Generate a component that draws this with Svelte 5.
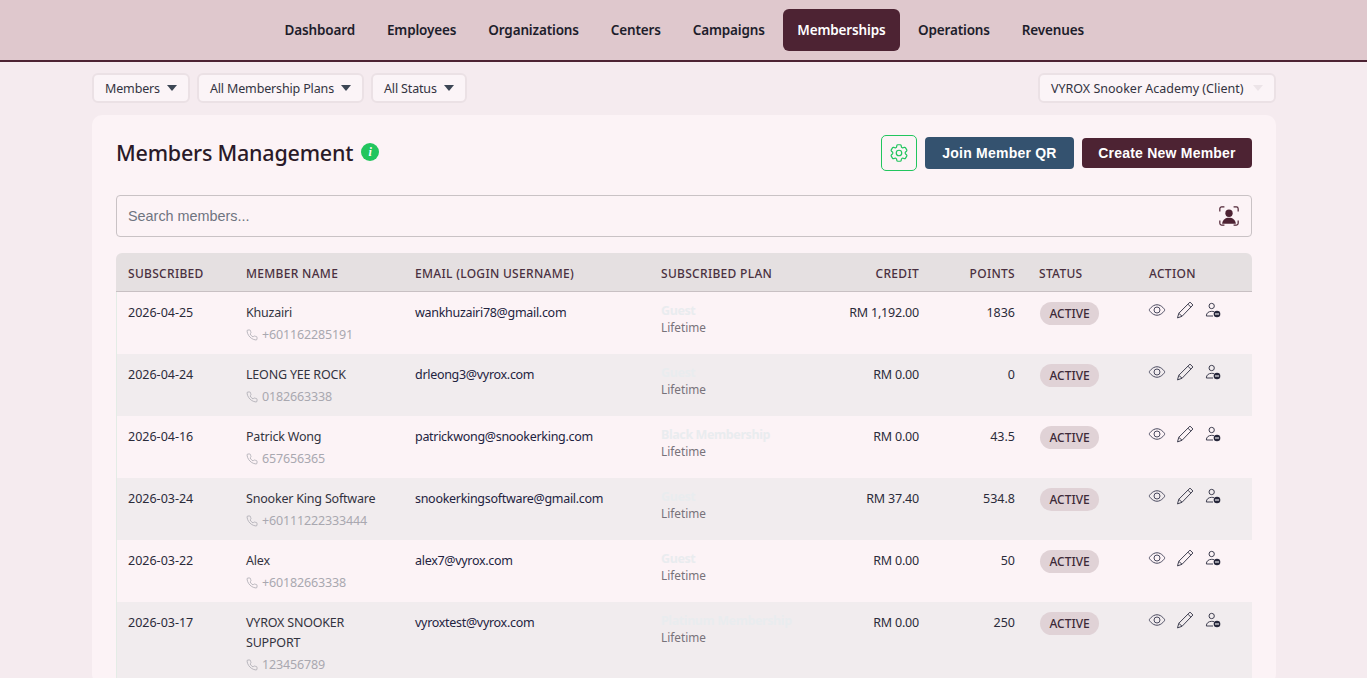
<script lang="ts">
type Member = {
	date: string;
	name: string;
	phone: string;
	email: string;
	plan: string;
	credit: string;
	points: string;
};

const navItems = ["Dashboard", "Employees", "Organizations", "Centers", "Campaigns", "Memberships", "Operations", "Revenues"];
const activeNav = "Memberships";
const filters = ["Members", "All Membership Plans", "All Status"];

const members: Member[] = [
	{ date: "2026-04-25", name: "Khuzairi", phone: "+601162285191", email: "wankhuzairi78@gmail.com", plan: "Guest", credit: "RM 1,192.00", points: "1836" },
	{ date: "2026-04-24", name: "LEONG YEE ROCK", phone: "0182663338", email: "drleong3@vyrox.com", plan: "Guest", credit: "RM 0.00", points: "0" },
	{ date: "2026-04-16", name: "Patrick Wong", phone: "657656365", email: "patrickwong@snookerking.com", plan: "Black Membership", credit: "RM 0.00", points: "43.5" },
	{ date: "2026-03-24", name: "Snooker King Software", phone: "+60111222333444", email: "snookerkingsoftware@gmail.com", plan: "Guest", credit: "RM 37.40", points: "534.8" },
	{ date: "2026-03-22", name: "Alex", phone: "+60182663338", email: "alex7@vyrox.com", plan: "Guest", credit: "RM 0.00", points: "50" },
	{ date: "2026-03-17", name: "VYROX SNOOKER SUPPORT", phone: "123456789", email: "vyroxtest@vyrox.com", plan: "Platinum Membership", credit: "RM 0.00", points: "250" },
];
</script>

<div class="page">
	<nav class="navbar">
		{#each navItems as item}
			<a href="#top" class="nav-link" class:active={item === activeNav}>{item}</a>
		{/each}
	</nav>

	<main class="container">
		<div class="filters">
			<div class="filter-group">
				{#each filters as filter}
					<div class="select">{filter}<span class="caret"></span></div>
				{/each}
			</div>
			<div class="select client">VYROX Snooker Academy (Client)<span class="caret pale"></span></div>
		</div>

		<section class="card">
			<header class="card-head">
				<div class="title-wrap">
					<h1>Members Management</h1>
					<span class="info">i</span>
				</div>
				<div class="actions">
					<button class="gear" aria-label="Settings">
						<svg viewBox="0 0 24 24" width="22" height="22" fill="none" stroke="#22c55e" stroke-width="1.3">
							<path d="M9.594 3.94c.09-.542.56-.94 1.11-.94h2.593c.55 0 1.02.398 1.11.94l.213 1.281c.063.374.313.686.645.87.074.04.147.083.22.127.325.196.72.257 1.075.124l1.217-.456a1.125 1.125 0 0 1 1.37.49l1.296 2.247a1.125 1.125 0 0 1-.26 1.431l-1.003.827c-.293.241-.438.613-.43.992a7.723 7.723 0 0 1 0 .255c-.008.378.137.75.43.991l1.004.827c.424.35.534.955.26 1.43l-1.298 2.247a1.125 1.125 0 0 1-1.369.491l-1.217-.456c-.355-.133-.75-.072-1.076.124a6.47 6.47 0 0 1-.22.128c-.331.183-.581.495-.644.869l-.213 1.281c-.09.543-.56.94-1.11.94h-2.594c-.55 0-1.019-.398-1.11-.94l-.213-1.281c-.062-.374-.312-.686-.644-.87a6.52 6.52 0 0 1-.22-.127c-.325-.196-.72-.257-1.076-.124l-1.217.456a1.125 1.125 0 0 1-1.369-.49l-1.297-2.247a1.125 1.125 0 0 1 .26-1.431l1.004-.827c.292-.24.437-.613.43-.991a6.932 6.932 0 0 1 0-.255c.007-.38-.138-.751-.43-.992l-1.004-.827a1.125 1.125 0 0 1-.26-1.43l1.297-2.247a1.125 1.125 0 0 1 1.37-.491l1.216.456c.356.133.751.072 1.076-.124.072-.044.146-.086.22-.128.332-.183.582-.495.644-.869l.214-1.28Z" />
							<circle cx="12" cy="12" r="3" />
						</svg>
					</button>
					<button class="btn join">Join Member QR</button>
					<button class="btn create">Create New Member</button>
				</div>
			</header>

			<div class="search">
				<span class="placeholder">Search members...</span>
				<svg viewBox="0 0 24 24" width="22" height="22" fill="none">
					<path d="M2 7V4a2 2 0 0 1 2-2h3M17 2h3a2 2 0 0 1 2 2v3M2 17v3a2 2 0 0 0 2 2h3M17 22h3a2 2 0 0 0 2-2v-3" stroke="#4d2333" stroke-width="1.3" />
					<circle cx="12" cy="9" r="4" fill="#4d2333" />
					<path d="M4.5 20.500c.6-4.500 3.600-6.500 7.500-6.500s6.900 2 7.500 6.500z" fill="#4d2333" />
				</svg>
			</div>

			<table>
				<colgroup>
					<col style="width:118px" />
					<col style="width:169px" />
					<col style="width:246px" />
					<col style="width:170px" />
					<col style="width:112px" />
					<col style="width:96px" />
					<col style="width:110px" />
					<col style="width:115px" />
				</colgroup>
				<thead>
					<tr>
						<th>SUBSCRIBED</th>
						<th>MEMBER NAME</th>
						<th>EMAIL (LOGIN USERNAME)</th>
						<th>SUBSCRIBED PLAN</th>
						<th class="right">CREDIT</th>
						<th class="right">POINTS</th>
						<th>STATUS</th>
						<th>ACTION</th>
					</tr>
				</thead>
				<tbody>
					{#each members as m}
						<tr>
							<td>{m.date}</td>
							<td>
								<div class="name">{m.name}</div>
								<div class="phone">
									<svg viewBox="0 0 24 24" width="12" height="12" fill="none" stroke="#a9a8b0" stroke-width="1.6">
										<path d="M22 16.920v3a2 2 0 0 1-2.180 2 19.790 19.790 0 0 1-8.630-3.070 19.500 19.500 0 0 1-6-6 19.790 19.790 0 0 1-3.070-8.670A2 2 0 0 1 4.110 2h3a2 2 0 0 1 2 1.720 12.840 12.840 0 0 0 .7 2.810 2 2 0 0 1-.45 2.110L8.090 9.910a16 16 0 0 0 6 6l1.270-1.270a2 2 0 0 1 2.110-.45 12.840 12.840 0 0 0 2.810.7A2 2 0 0 1 22 16.920z" />
									</svg>
									{m.phone}
								</div>
							</td>
							<td class="email">{m.email}</td>
							<td>
								<div class="plan">{m.plan}</div>
								<div class="term">Lifetime</div>
							</td>
							<td class="right credit">{m.credit}</td>
							<td class="right">{m.points}</td>
							<td><span class="badge">ACTIVE</span></td>
							<td>
								<div class="row-actions">
									<svg viewBox="0 0 24 24" width="18" height="18" fill="none" stroke="#45455a" stroke-width="1.300">
										<path d="M1.500 12S5.500 5 12 5s10.500 7 10.500 7S18.500 19 12 19 1.500 12 1.500 12z" />
										<circle cx="12" cy="12" r="4" />
									</svg>
									<svg viewBox="0 0 24 24" width="20" height="20" fill="none" stroke="#3f3f50" stroke-width="1.200">
										<path d="M18 2.500l3.500 3.500L8.500 19.500 3 21.500 4.500 16z" />
										<path d="M15.500 5l3.500 3.500M4.500 16l4 3.500" />
									</svg>
									<svg class="remove-user" viewBox="0 0 24 24" width="16" height="16" fill="none" stroke="#3f3f50" stroke-width="1.500">
										<circle cx="10" cy="6" r="4" />
										<path d="M2 21c0-4.500 3.500-7 8-7 1.300 0 2.500.2 3.500.6M2 21h10" />
										<circle cx="18" cy="18" r="5" fill="#26263a" stroke="none" />
										<path d="M15 18h6" stroke="#fff" stroke-width="1.600" />
									</svg>
								</div>
							</td>
						</tr>
					{/each}
				</tbody>
			</table>
		</section>
	</main>
</div>

<style>
	:global(body) {
		margin: 0;
		background: #f5ebef;
		font-family: "Noto Sans", "Open Sans", sans-serif;
		color: #2b2b3a;
	}

	.page {
		height: 678px;
		overflow: hidden;
	}

	.navbar {
		display: flex;
		justify-content: center;
		align-items: center;
		gap: 4px;
		height: 60px;
		padding-left: 1.500px;
		background: #dfc8cd;
		border-bottom: 2px solid #4d2333;
	}

	.nav-link {
		padding: 0 14px;
		height: 42px;
		line-height: 42px;
		border-radius: 6px;
		font-size: 13.500px;
		font-weight: 600;
		letter-spacing: -0.15px;
		color: #1d1d2b;
		text-decoration: none;
	}

	.nav-link.active {
		padding: 0 14.500px;
		background: #4d2333;
		color: #fff;
	}

	.container {
		padding: 11px 91px 0 92px;
	}

	.filters {
		display: flex;
		justify-content: space-between;
		margin-bottom: 12px;
	}

	.filter-group {
		display: flex;
		gap: 7px;
		letter-spacing: -0.15px;
	}

	.select {
		display: flex;
		align-items: center;
		height: 26px;
		padding: 0 11px;
		border: 2px solid #ebe1e5;
		border-radius: 6px;
		background: #fbf4f7;
		font-size: 12.500px;
		color: #33333f;
		white-space: nowrap;
	}

	.client {
		width: 212px;
		justify-content: space-between;
	}

	.caret {
		margin-left: 7px;
		border-left: 5px solid transparent;
		border-right: 5px solid transparent;
		border-top: 6px solid #3c4654;
	}

	.caret.pale {
		border-top-color: #ece4e8;
	}

	.card {
		background: #fcf3f6;
		border-radius: 10px;
		padding: 20px 24px 0;
	}

	.card-head {
		display: flex;
		justify-content: space-between;
		align-items: center;
		height: 36px;
		margin-bottom: 24px;
	}

	.title-wrap {
		display: flex;
		align-items: center;
		gap: 8px;
	}

	h1 {
		margin: 0 0 2px;
		font-size: 21.500px;
		font-weight: 500;
		letter-spacing: -0.22px;
		color: #2a1a28;
	}

	.info {
		display: flex;
		align-items: center;
		justify-content: center;
		width: 18px;
		height: 18px;
		margin-bottom: 2px;
		border-radius: 50%;
		background: #22c55e;
		color: #fff;
		font-size: 12px;
		font-weight: 700;
		font-style: italic;
		font-family: "Liberation Serif", serif;
	}

	.actions {
		display: flex;
		align-items: center;
		gap: 8px;
	}

	.gear {
		display: flex;
		align-items: center;
		justify-content: center;
		box-sizing: border-box;
		width: 36px;
		height: 36px;
		padding: 0;
		background: transparent;
		border: 1px solid #22c55e;
		border-radius: 5px;
	}

	.btn {
		border: none;
		border-radius: 4px;
		color: #fff;
		font-family: "Liberation Sans", Arial, sans-serif;
		font-size: 14px;
		font-weight: 700;
		letter-spacing: 0.22px;
	}

	.join {
		width: 149px;
		height: 32px;
		background: #34526f;
	}

	.create {
		width: 170px;
		height: 30px;
		background: #4d2333;
	}

	.search {
		display: flex;
		align-items: center;
		justify-content: space-between;
		box-sizing: border-box;
		height: 42px;
		padding: 0 11px;
		margin-bottom: 16px;
		border: 1px solid #c9c2c5;
		border-radius: 4px;
	}

	.placeholder {
		font-family: "Liberation Sans", Arial, sans-serif;
		font-size: 14.400px;
		color: #6f7480;
	}

	table {
		width: 1136px;
		table-layout: fixed;
		border-collapse: collapse;
		font-size: 12.500px;
	}

	th {
		height: 36px;
		padding: 2px 12px 0;
		text-align: left;
		background: #e5e0e1;
		border-bottom: 1px solid #c8c0c3;
		color: #4a3040;
		font-size: 12px;
		font-weight: 500;
		letter-spacing: 0.3px;
	}

	thead tr th:first-child {
		border-top-left-radius: 6px;
	}

	thead tr th:last-child {
		border-top-right-radius: 6px;
	}

	td {
		padding: 10px 12px 9px;
		height: 43px;
		vertical-align: top;
		line-height: 21px;
	}

	td:first-child {
		box-shadow: inset 1px 0 #e4ece6;
	}

	tbody tr:nth-child(even) {
		background: #f1ecee;
	}

	.right {
		text-align: right;
	}

	.credit {
		letter-spacing: -0.2px;
	}

	.name {
		margin-top: 1px;
		line-height: 20px;
		letter-spacing: -0.2px;
		color: #33333f;
	}

	.phone {
		display: flex;
		align-items: center;
		gap: 4px;
		margin-top: 1px;
		letter-spacing: -0.15px;
		color: #a9a8b0;
	}

	.email {
		letter-spacing: -0.3px;
		color: #23233f;
	}

	.plan {
		line-height: 15px;
		margin-top: 1px;
		font-weight: 700;
		letter-spacing: -0.4px;
		color: #e9ecef;
		white-space: nowrap;
	}

	.term {
		line-height: 18px;
		font-size: 11.800px;
		color: #77727a;
	}

	.badge {
		display: inline-block;
		margin-left: 1px;
		padding: 0 9.500px;
		line-height: 23px;
		border-radius: 12px;
		background: #e0d2d6;
		color: #3d2a38;
		font-size: 12px;
		font-weight: 500;
	}

	.row-actions {
		display: flex;
		align-items: center;
		gap: 9px;
		margin: -2px 0 0 -1px;
	}

	.remove-user {
		margin-left: 1px;
	}
</style>
